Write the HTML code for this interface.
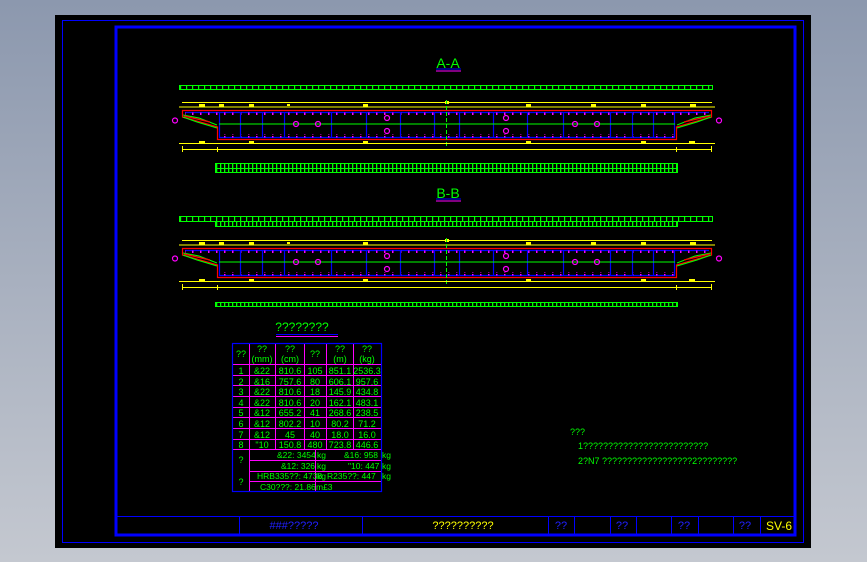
<!DOCTYPE html>
<html><head><meta charset="utf-8"><style>
html,body{margin:0;padding:0;width:867px;height:562px;overflow:hidden;background:linear-gradient(#8c98ae,#c4c8d0);}
svg{display:block}
text{font-family:"Liberation Sans",sans-serif;}
</style></head><body>
<svg width="867" height="562" viewBox="0 0 867 562" xmlns="http://www.w3.org/2000/svg">
<defs>
<pattern id="gs" x="0" y="0" width="6" height="20" patternUnits="userSpaceOnUse"><rect x="0" y="0" width="1.2" height="20" fill="#00ff00"/></pattern>
<pattern id="gs2" x="0" y="0" width="4" height="20" patternUnits="userSpaceOnUse"><rect x="0" y="0" width="1.3" height="20" fill="#00ff00"/></pattern>
<pattern id="mt" x="0" y="0" width="8" height="4" patternUnits="userSpaceOnUse"><rect x="0" y="0" width="1.5" height="3" fill="#ff00ff"/></pattern>
<g id="sec">
 <line x1="182" y1="102.5" x2="712" y2="102.5" stroke="#ffff00" stroke-width="1"/>
 <line x1="179" y1="107" x2="715" y2="107" stroke="#ffff00" stroke-width="1"/>
 <g fill="#ffff00">
  <rect x="199" y="104" width="6" height="3"/><rect x="219" y="104" width="5" height="3"/><rect x="249" y="104" width="5" height="3"/><rect x="287" y="104" width="3" height="2"/><rect x="363" y="104" width="5" height="3"/><rect x="445" y="101" width="4" height="3"/><rect x="526" y="104" width="5" height="3"/><rect x="591" y="104" width="5" height="3"/><rect x="641" y="104" width="5" height="3"/><rect x="690" y="104" width="6" height="3"/>
  <rect x="199" y="141" width="6" height="3"/><rect x="249" y="141" width="5" height="3"/><rect x="363" y="141" width="5" height="3"/><rect x="526" y="141" width="5" height="3"/><rect x="641" y="141" width="5" height="3"/><rect x="689" y="141" width="6" height="3"/>
 </g>
 <path d="M182.5,110.5 L711.5,110.5 L711.5,117 L676.5,127 L676.5,139.5 L217.5,139.5 L217.5,127 L182.5,117 Z" fill="none" stroke="#ff0000" stroke-width="1.2"/>
 <line x1="185" y1="112.5" x2="709" y2="112.5" stroke="#0000ff" stroke-width="1.2"/>
 <line x1="219" y1="137.5" x2="675" y2="137.5" stroke="#0000ff" stroke-width="1.2"/>
 <rect x="185" y="112.5" width="524" height="3" fill="url(#mt)"/>
 <rect x="220" y="134.5" width="454" height="3" fill="url(#mt)"/>
 <g stroke="#0000ff" stroke-width="1.2">
  <line x1="219.5" y1="112" x2="219.5" y2="138"/><line x1="240.5" y1="112" x2="240.5" y2="138"/><line x1="262.5" y1="112" x2="262.5" y2="138"/><line x1="284.5" y1="112" x2="284.5" y2="138"/><line x1="331.5" y1="112" x2="331.5" y2="138"/><line x1="366.5" y1="112" x2="366.5" y2="138"/><line x1="400.5" y1="112" x2="400.5" y2="138"/><line x1="434.5" y1="112" x2="434.5" y2="138"/><line x1="459.5" y1="112" x2="459.5" y2="138"/><line x1="493.5" y1="112" x2="493.5" y2="138"/><line x1="527.5" y1="112" x2="527.5" y2="138"/><line x1="563.5" y1="112" x2="563.5" y2="138"/><line x1="610.5" y1="112" x2="610.5" y2="138"/><line x1="632.5" y1="112" x2="632.5" y2="138"/><line x1="653.5" y1="112" x2="653.5" y2="138"/><line x1="674.5" y1="112" x2="674.5" y2="138"/>
 </g>
 <line x1="219" y1="124" x2="675" y2="124" stroke="#00ff00" stroke-width="1"/>
 <line x1="446.5" y1="100" x2="446.5" y2="146" stroke="#00ff00" stroke-width="1" stroke-dasharray="4,2"/>
 <path d="M183,115 L199,118 L217,125 M183,117 L197,122 L217,128" fill="none" stroke="#00ff00" stroke-width="1"/>
 <path d="M184,116 L210,122" stroke="#ff0000" stroke-width="1.3"/>
 <path d="M711,115 L695,118 L677,125 M711,117 L697,122 L677,128" fill="none" stroke="#00ff00" stroke-width="1"/>
 <path d="M710,116 L684,122" stroke="#ff0000" stroke-width="1.3"/>
 <g fill="none" stroke="#ff00ff" stroke-width="1.2">
  <circle cx="175" cy="120.5" r="2.5"/><circle cx="719" cy="120.5" r="2.5"/><circle cx="296" cy="124" r="2.5"/><circle cx="318" cy="124" r="2.5"/><circle cx="387" cy="118" r="2.5"/><circle cx="387" cy="131" r="2.5"/><circle cx="506" cy="118" r="2.5"/><circle cx="506" cy="131" r="2.5"/><circle cx="575" cy="124" r="2.5"/><circle cx="597" cy="124" r="2.5"/>
 </g>
 <line x1="179" y1="143.5" x2="715" y2="143.5" stroke="#ffff00" stroke-width="1"/>
 <line x1="182" y1="149.5" x2="712" y2="149.5" stroke="#ffff00" stroke-width="1"/>
 <g stroke="#ffff00"><line x1="182.5" y1="146" x2="182.5" y2="152"/><line x1="711.5" y1="146" x2="711.5" y2="152"/><line x1="217.5" y1="147" x2="217.5" y2="152"/><line x1="676.5" y1="147" x2="676.5" y2="152"/></g>
</g>
</defs>
<rect x="55" y="15" width="756" height="533" fill="#000"/>
<rect x="62.5" y="20.5" width="741" height="522" fill="none" stroke="#0000ff" stroke-width="1"/>
<rect x="116" y="27" width="679" height="508" fill="none" stroke="#0000ff" stroke-width="3"/>
<line x1="117" y1="516.5" x2="794" y2="516.5" stroke="#0000ff" stroke-width="1"/>
<g stroke="#0000ff" stroke-width="1">
 <line x1="239.5" y1="516" x2="239.5" y2="534"/><line x1="362.5" y1="516" x2="362.5" y2="534"/><line x1="548.5" y1="516" x2="548.5" y2="534"/><line x1="574.5" y1="516" x2="574.5" y2="534"/><line x1="610.5" y1="516" x2="610.5" y2="534"/><line x1="636.5" y1="516" x2="636.5" y2="534"/><line x1="671.5" y1="516" x2="671.5" y2="534"/><line x1="698.5" y1="516" x2="698.5" y2="534"/><line x1="733.5" y1="516" x2="733.5" y2="534"/><line x1="760.5" y1="516" x2="760.5" y2="534"/>
</g>
<g font-size="11" text-anchor="middle">
 <text x="294" y="529" fill="#2020ff">###?????</text>
 <text x="463" y="529" fill="#ffff00">??????????</text>
 <text x="561" y="529" fill="#2020ff">??</text>
 <text x="622" y="529" fill="#2020ff">??</text>
 <text x="684" y="529" fill="#2020ff">??</text>
 <text x="745" y="529" fill="#2020ff">??</text>
 <text x="779" y="530" fill="#ffff00" font-size="12">SV-6</text>
</g>
<text x="448" y="68" fill="#00ff00" font-size="14" text-anchor="middle">A-A</text>
<line x1="436" y1="69" x2="461" y2="69" stroke="#0000ff"/><line x1="436" y1="71" x2="461" y2="71" stroke="#ff00ff"/>
<rect x="179.5" y="85.5" width="533" height="4" fill="url(#gs)" stroke="#00ff00"/>
<use href="#sec"/>
<rect x="215.5" y="163.5" width="462" height="9" fill="url(#gs2)" stroke="#00ff00"/>
<line x1="215" y1="168.5" x2="678" y2="168.5" stroke="#00ff00"/>
<text x="448" y="198" fill="#00ff00" font-size="14" text-anchor="middle">B-B</text>
<line x1="436" y1="199" x2="461" y2="199" stroke="#0000ff"/><line x1="436" y1="201" x2="461" y2="201" stroke="#ff00ff"/>
<rect x="179.5" y="216.5" width="533" height="5" fill="url(#gs)" stroke="#00ff00"/>
<rect x="215.5" y="221.5" width="462" height="5" fill="url(#gs2)" stroke="#00ff00"/>
<use href="#sec" transform="translate(0,138)"/>
<rect x="215.5" y="302.5" width="462" height="4" fill="url(#gs2)" stroke="#00ff00"/>
<text x="302" y="331" fill="#00ff00" font-size="12" text-anchor="middle">????????</text>
<line x1="276" y1="334.5" x2="338" y2="334.5" stroke="#0000ff"/><line x1="276" y1="336.5" x2="338" y2="336.5" stroke="#ff00ff"/>
<g stroke="#ff00ff" stroke-width="1">
 <line x1="233" y1="364.5" x2="381" y2="364.5"/><line x1="233" y1="375.5" x2="381" y2="375.5"/><line x1="233" y1="385.5" x2="381" y2="385.5"/><line x1="233" y1="396.5" x2="381" y2="396.5"/><line x1="233" y1="407.5" x2="381" y2="407.5"/><line x1="233" y1="417.5" x2="381" y2="417.5"/><line x1="233" y1="428.5" x2="381" y2="428.5"/><line x1="233" y1="439.5" x2="381" y2="439.5"/><line x1="233" y1="449.5" x2="381" y2="449.5"/><line x1="249" y1="460.5" x2="381" y2="460.5"/><line x1="249" y1="471.5" x2="381" y2="471.5"/><line x1="249" y1="481.5" x2="381" y2="481.5"/>
 <line x1="249.5" y1="344" x2="249.5" y2="491"/><line x1="275.5" y1="344" x2="275.5" y2="449"/><line x1="304.5" y1="344" x2="304.5" y2="449"/><line x1="326.5" y1="344" x2="326.5" y2="449"/><line x1="353.5" y1="344" x2="353.5" y2="449"/><line x1="315.5" y1="449" x2="315.5" y2="491"/>
</g>
<rect x="232.5" y="343.5" width="149" height="148" fill="none" stroke="#0000ff" stroke-width="1.2"/>
<g fill="#00ff00" font-size="9" text-anchor="middle">
 <text x="241" y="357">??</text>
 <text x="262" y="352">??</text><text x="262" y="362">(mm)</text>
 <text x="290" y="352">??</text><text x="290" y="362">(cm)</text>
 <text x="315" y="357">??</text>
 <text x="340" y="352">??</text><text x="340" y="362">(m)</text>
 <text x="367" y="352">??</text><text x="367" y="362">(kg)</text>
 <text x="241" y="374">1</text><text x="262" y="374">&amp;22</text><text x="290" y="374">810.6</text><text x="315" y="374">105</text><text x="340" y="374">851.1</text><text x="367" y="374">2536.3</text>
 <text x="241" y="385">2</text><text x="262" y="385">&amp;16</text><text x="290" y="385">757.6</text><text x="315" y="385">80</text><text x="340" y="385">606.1</text><text x="367" y="385">957.6</text>
 <text x="241" y="395">3</text><text x="262" y="395">&amp;22</text><text x="290" y="395">810.6</text><text x="315" y="395">18</text><text x="340" y="395">145.9</text><text x="367" y="395">434.8</text>
 <text x="241" y="406">4</text><text x="262" y="406">&amp;22</text><text x="290" y="406">810.6</text><text x="315" y="406">20</text><text x="340" y="406">162.1</text><text x="367" y="406">483.1</text>
 <text x="241" y="416">5</text><text x="262" y="416">&amp;12</text><text x="290" y="416">655.2</text><text x="315" y="416">41</text><text x="340" y="416">268.6</text><text x="367" y="416">238.5</text>
 <text x="241" y="427">6</text><text x="262" y="427">&amp;12</text><text x="290" y="427">802.2</text><text x="315" y="427">10</text><text x="340" y="427">80.2</text><text x="367" y="427">71.2</text>
 <text x="241" y="438">7</text><text x="262" y="438">&amp;12</text><text x="290" y="438">45</text><text x="315" y="438">40</text><text x="340" y="438">18.0</text><text x="367" y="438">16.0</text>
 <text x="241" y="448">8</text><text x="262" y="448">"10</text><text x="290" y="448">150.8</text><text x="315" y="448">480</text><text x="340" y="448">723.8</text><text x="367" y="448">446.6</text>
 <text x="241" y="463">?</text><text x="241" y="485">?</text>
</g>
<g fill="#00ff00" font-size="8.5">
 <text x="277" y="458">&amp;22: 3454</text><text x="317" y="458">kg</text><text x="344" y="458">&amp;16: 958</text><text x="382" y="458">kg</text>
 <text x="281" y="469">&amp;12: 326</text><text x="317" y="469">kg</text><text x="348" y="469">"10: 447</text><text x="382" y="469">kg</text>
 <text x="257" y="479">HRB335??: 4738</text><text x="317" y="479">kg</text><text x="327" y="479">R235??: 447</text><text x="382" y="479">kg</text>
 <text x="260" y="490">C30???: 21.86</text><text x="316" y="490">m£3</text>
</g>
<g fill="#00ff00" font-size="9">
 <text x="570" y="435">???</text>
 <text x="578" y="449">1?????????????????????????</text>
 <text x="578" y="464">2?N7 ??????????????????2????????</text>
</g>
</svg>
</body></html>
